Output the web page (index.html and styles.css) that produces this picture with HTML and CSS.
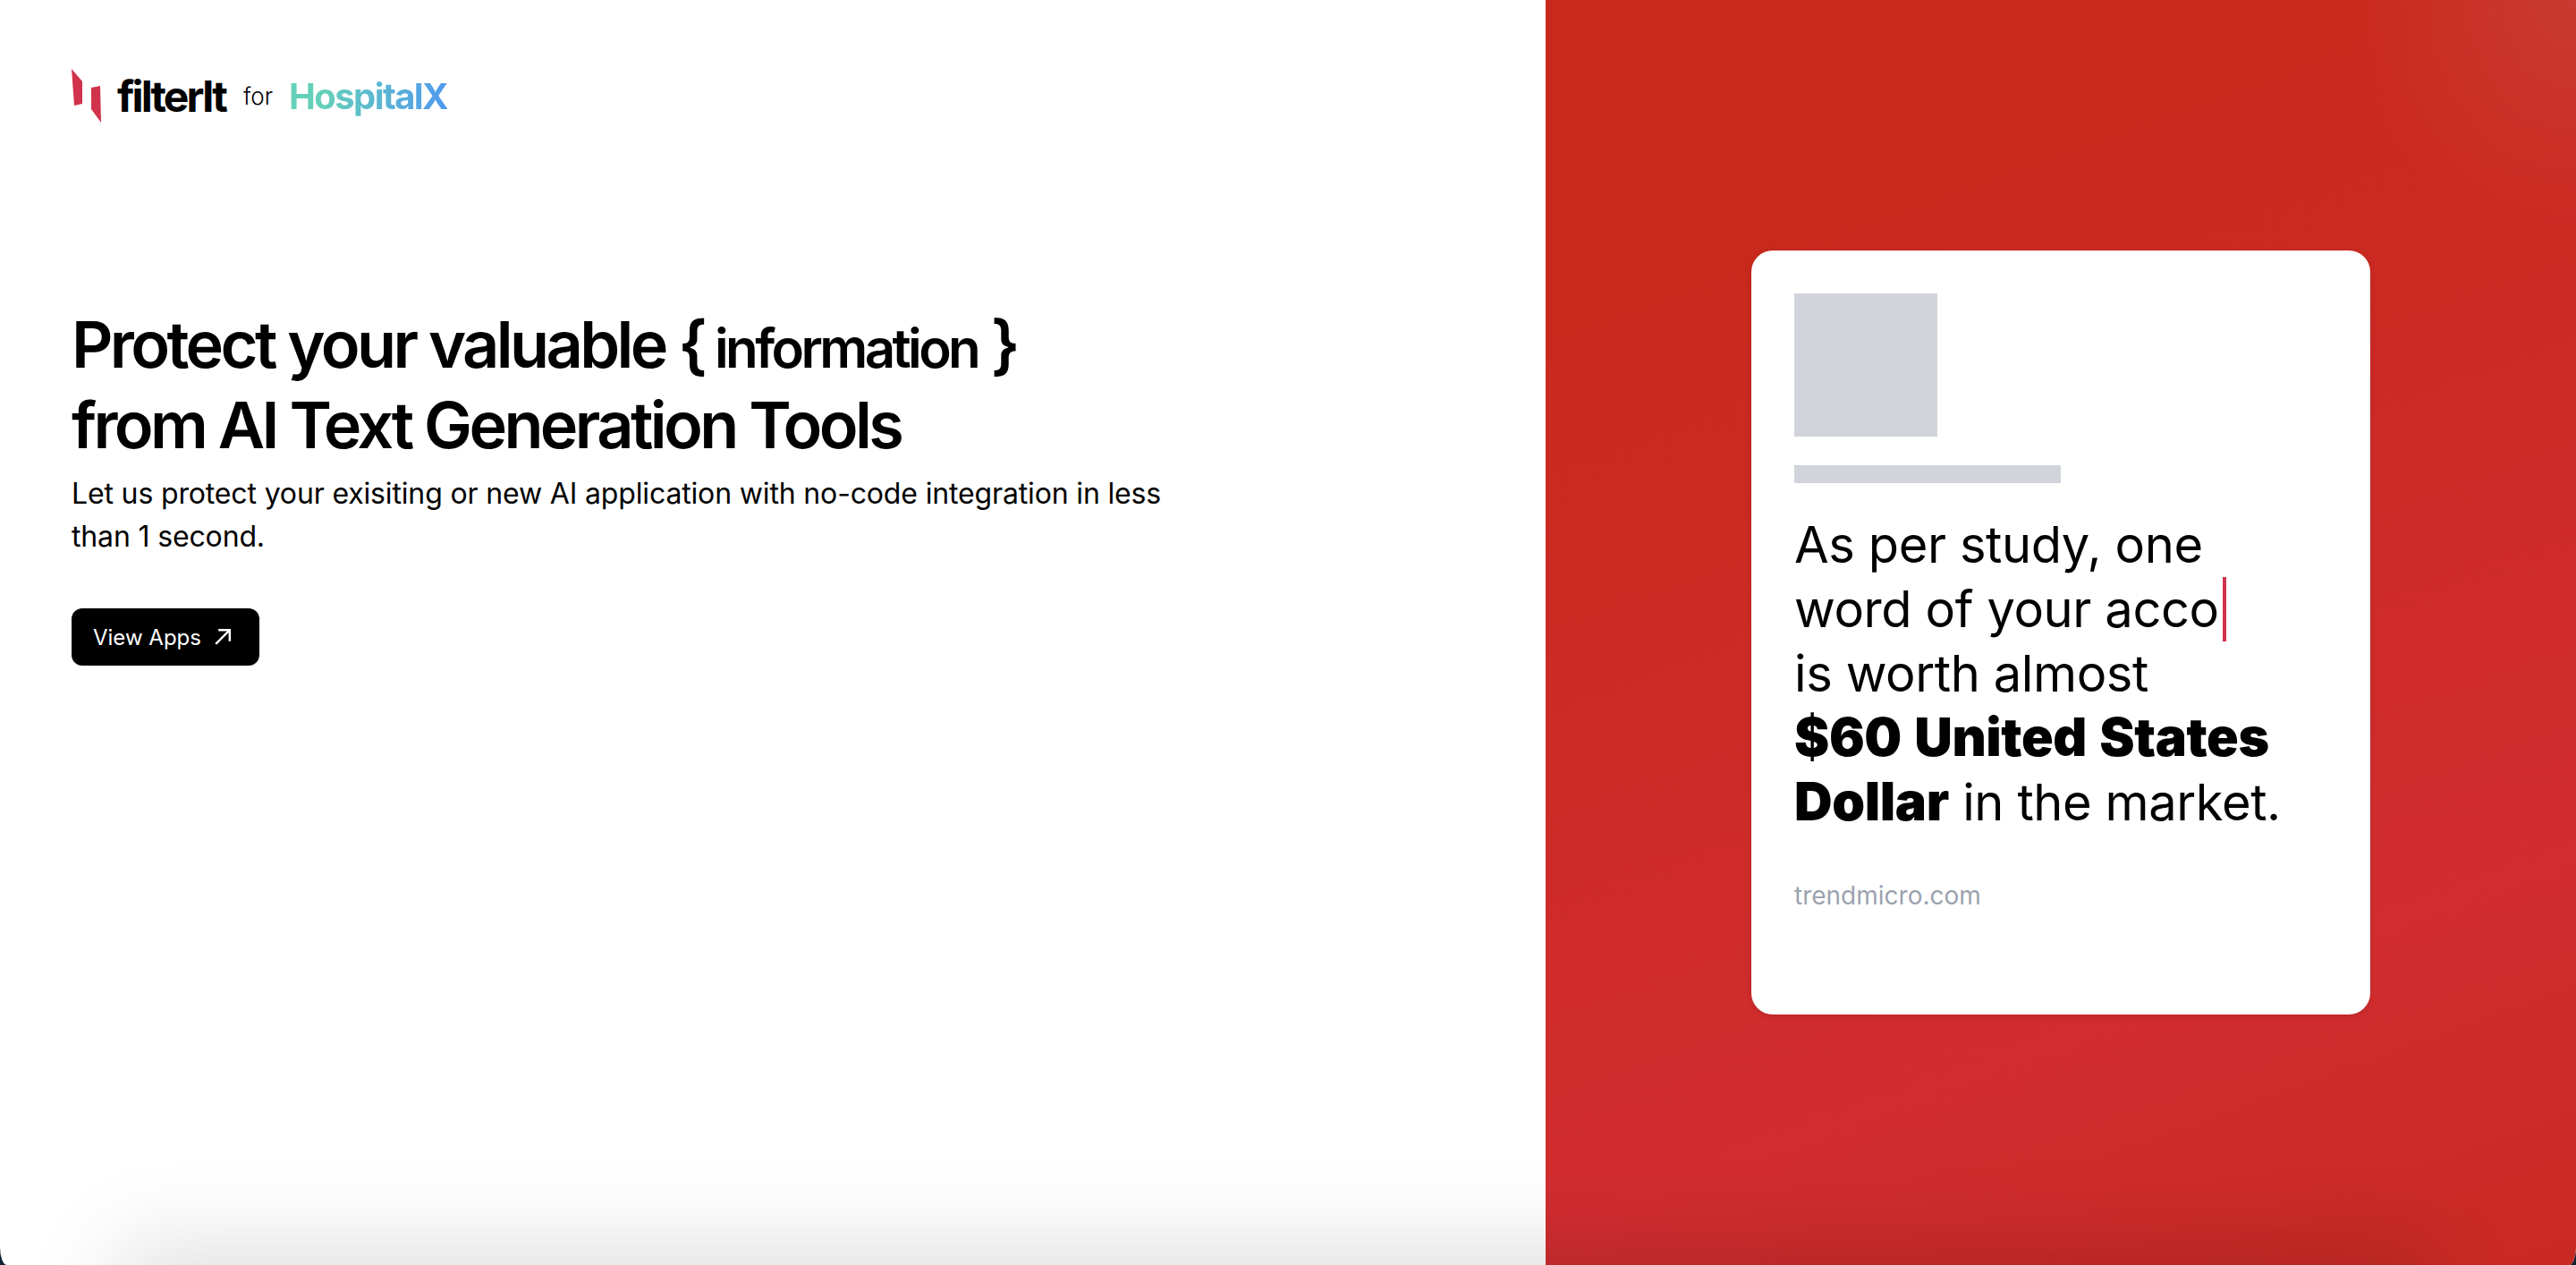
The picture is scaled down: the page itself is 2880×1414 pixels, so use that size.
FILE: index.html
```html
<!DOCTYPE html>
<html lang="en">
<head>
  <meta charset="UTF-8">
  <meta name="viewport" content="width=device-width, initial-scale=1.0">
  <title>filterIt for HospitalX</title>
  <link rel="stylesheet" href="styles.css">
</head>
<body>
  <div class="page">
    <section class="left">
      <header class="brand">
        <svg class="brand-mark" viewBox="0 0 34 61" width="34" height="61">
          <path d="M0 0 L12 14 L12 39 L3 41 Z" fill="#d0334b"/>
          <path d="M22 21 L32 19 L33 60 L22 45 Z" fill="#d0334b"/>
        </svg>
        <span class="brand-name">filterIt</span>
        <span class="brand-for">for</span>
        <span class="brand-client">HospitalX</span>
      </header>

      <h1 class="title">Protect your valuable { <span class="title-small">information</span> }<br>from AI Text Generation Tools</h1>
      <p class="lead">Let us protect your exisiting or new AI application with no-code integration in less than 1 second.</p>
      <a class="btn" href="#">
        View Apps
        <svg viewBox="0 0 20 20" width="24" height="24" fill="none" stroke="#fff" stroke-width="2">
          <path d="M3.5 16.5 L16 4 M6 3.5 H16.5 V14"/>
        </svg>
      </a>
    </section>

    <section class="right">
      <div class="card">
        <div class="thumb"></div>
        <div class="bar"></div>
        <p class="quote">As per study, one<br>word of your acco<span class="caret"></span><br>is worth almost<br><strong>$60 United States</strong><br><strong>Dollar</strong> in the market.</p>
        <p class="source">trendmicro.com</p>
      </div>
    </section>

    <div class="bottom-shadow"></div>
  </div>
</body>
</html>
```

FILE: styles.css
```css
* {
  box-sizing: border-box;
}

html, body {
  background: #10212f;
}

body {
  font-family: Inter, "Liberation Sans", sans-serif;
  margin: 0;
  color: #000;
}

.page {
  display: flex;
  height: 1414px;
  position: relative;
  overflow: hidden;
  background: #fff;
  border-radius: 0 0 8px 8px / 0 0 20px 20px;
}

.left {
  width: 1728px;
  padding: 76px 80px 0;
}

.brand {
  display: flex;
  align-items: center;
  height: 62px;
}

.brand-mark {
  margin-right: 17px;
}

.brand-name {
  font-size: 48px;
  font-weight: 700;
  letter-spacing: -0.06em;
}

.brand-for {
  font-size: 26px;
  font-weight: 300;
  margin-left: 20px;
}

.brand-client {
  font-size: 40px;
  font-weight: 700;
  letter-spacing: -0.04em;
  margin-left: 18px;
  background: linear-gradient(90deg, #65d0b9 20%, #5099ee 100%);
  -webkit-background-clip: text;
  background-clip: text;
  color: transparent;
}

.title {
  font-size: 72px;
  font-weight: 600;
  line-height: 90px;
  letter-spacing: -0.05em;
  margin: 202px 0 0;
}

.title-small {
  font-size: 60px;
  line-height: 1;
  margin-left: -3px;
}

.lead {
  font-size: 32px;
  line-height: 48px;
  letter-spacing: -0.15px;
  width: 1240px;
  margin: 8px 0 0;
}

.btn {
  display: flex;
  align-items: center;
  gap: 12px;
  height: 64px;
  width: 210px;
  padding-left: 24px;
  margin-top: 56px;
  background: #000;
  color: #fff;
  border-radius: 12px;
  font-size: 24px;
  text-decoration: none;
}

.right {
  flex: 1;
  display: flex;
  justify-content: center;
  padding-top: 280px;
  background:
    radial-gradient(circle at 100% 0, #ca3a30 0, rgba(202, 58, 48, 0) 260px),
    linear-gradient(160deg, #c9291d 20%, #d12d30 75%, #c82a22 100%);
}

.card {
  width: 692px;
  height: 854px;
  padding: 48px;
  background: #fff;
  border-radius: 24px;
  box-shadow: 0 2px 6px rgba(0, 0, 0, 0.12);
}

.thumb {
  width: 160px;
  height: 160px;
  background: #d1d5db;
}

.bar {
  width: 298px;
  height: 20px;
  margin-top: 32px;
  background: #d1d5db;
}

.quote {
  font-size: 56px;
  line-height: 72px;
  letter-spacing: -0.4px;
  margin: 33px 0 0;
}

.quote strong {
  font-size: 59px;
  font-weight: 900;
  line-height: 1;
  word-spacing: 3px;
}

.caret {
  display: inline-block;
  width: 4px;
  height: 72px;
  margin-left: 4px;
  background: #d0334b;
  vertical-align: top;
}

.source {
  font-size: 28px;
  line-height: 40px;
  color: #9ca3af;
  margin: 48px 0 0;
}

.bottom-shadow {
  position: absolute;
  left: 130px;
  right: 160px;
  top: 1500px;
  height: 200px;
  box-shadow: 0 -108px 100px 0 rgba(0, 0, 0, 0.125);
}
```
